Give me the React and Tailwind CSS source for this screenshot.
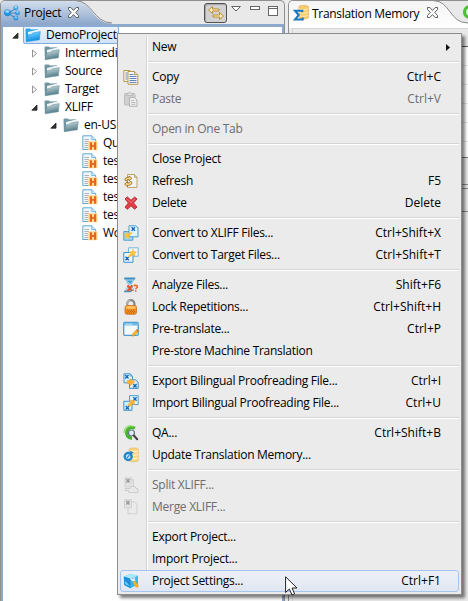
import React from "react";

/* ---------- small 16px icons ---------- */

const Svg = ({ children, className = "" }) => (
  <svg width="16" height="16" viewBox="0 0 16 16" className={`block shrink-0 ${className}`}>
    {children}
  </svg>
);

const ProjectIcon = () => (
  <Svg>
    <path d="M4 8L12 3.500M4 8h8M4 8l8 5.500" stroke="#4a8fca" strokeWidth="1.200" />
    <circle cx="3.400" cy="7.800" r="3.100" fill="#1f97ec" stroke="#1272bd" strokeWidth=".5" />
    <circle cx="11.800" cy="2.800" r="2.100" fill="#49b0f2" stroke="#1c7fca" strokeWidth=".5" />
    <circle cx="13.500" cy="8" r="2.100" fill="#35a5ee" stroke="#1c7fca" strokeWidth=".5" />
    <circle cx="11.800" cy="13.200" r="2.100" fill="#35a5ee" stroke="#1c7fca" strokeWidth=".5" />
    <ellipse cx="3.300" cy="6.500" rx="2" ry="1.200" fill="#a8defc" />
    <ellipse cx="11.800" cy="1.900" rx="1.300" ry=".8" fill="#c2e9ff" />
    <ellipse cx="13.500" cy="7.100" rx="1.300" ry=".8" fill="#a8defc" />
    <ellipse cx="11.800" cy="12.300" rx="1.300" ry=".8" fill="#a8defc" />
  </Svg>
);

const CloseX = () => (
  <svg width="11" height="11" viewBox="0 0 11 11" className="block shrink-0">
    <path
      d="M.5 .5h2.300l2.700 2.900L8.200 .5h2.300v2L7.700 5.500l2.800 3v2H8.200L5.500 7.600l-2.700 2.900H.5v-2l2.800-3L.5 2.500z"
      fill="#fafafa"
      stroke="#5d5d5d"
      strokeWidth="1"
    />
  </svg>
);

const Folder = ({ blue }) => {
  const id = blue ? "fb" : "fg";
  return (
    <Svg>
      <defs>
        <linearGradient id={id} x1="0" y1="0" x2=".3" y2="1">
          <stop offset="0" stopColor={blue ? "#9fe2ff" : "#d0dee2"} />
          <stop offset=".5" stopColor={blue ? "#43b8f7" : "#94afb7"} />
          <stop offset="1" stopColor={blue ? "#0f8be0" : "#4f7a87"} />
        </linearGradient>
      </defs>
      <path d="M.5 2.300l.8-.8h3.500l1.200 1 7-.2v9L1.500 14.500H.9z" fill={blue ? "#2ea4ea" : "#7296a1"} />
      <path d="M3 5l11-2.700v8l-11 2z" fill={blue ? "#e2f6ff" : "#eef3f4"} />
      <path d="M1.200 14.800L3.200 7.800l3.300-.6 1.200-1.200 7.600-1.400-.9 8.200z" fill={`url(#${id})`} stroke={blue ? "#1b8dd8" : "#6b929c"} strokeWidth=".5" />
    </Svg>
  );
};

const FileH = () => (
  <Svg>
    <path d="M.8 .8h9l3.900 3.700v10H.8z" fill="#eef7fd" stroke="#62a8cf" />
    <path d="M9.800 .8v3.700h3.900" fill="#d2edfb" stroke="#62a8cf" strokeWidth=".8" />
    <path d="M2.500 4.500h4.500M2.500 6.500h4.500M2.500 8.500h3.500M2.500 10.500h3.500M2.500 12.500h3.500" stroke="#aab3b9" />
    <rect x="6.300" y="6.300" width="9.200" height="9" rx=".5" fill="#ffdc90" />
    <path d="M8.900 7.200v7.500M13.100 7.200v7.500" stroke="#e8641f" strokeWidth="2.200" />
    <path d="M9 10.900h4" stroke="#e8641f" strokeWidth="1.900" />
  </Svg>
);

const CopyIcon = () => (
  <Svg>
    <path d="M.8 1.500h6l2 2v9h-8z" fill="#fbf6e2" stroke="#b79b4c" />
    <path d="M2.500 4h2M2.500 6h2M2.500 8h2M2.500 10h2" stroke="#6d89bf" />
    <path d="M5 2.500h6.500l3.300 3.200v9.600H5z" fill="#f4f7fc" stroke="#b79b4c" />
    <path d="M11.500 2.500v3.300h3.300" fill="#e8d9a0" stroke="#b79b4c" strokeWidth=".9" />
    <path d="M6.500 5.500h4M6.500 7.500h7M6.500 9.500h7M6.500 11.500h7M6.500 13.400h7" stroke="#5577b5" strokeWidth=".9" />
  </Svg>
);

const PasteIcon = () => (
  <Svg>
    <rect x="1.500" y="2.500" width="10.500" height="11.500" rx="1" fill="#cfcfcf" stroke="#bcbcbc" />
    <path d="M4 4.500V2.500h1.500L6.700 .9l1.300 1.600h1.500v2z" fill="#e2e2e2" stroke="#b2b2b2" strokeWidth=".8" />
    <path d="M6.500 6.500h4.700l2.800 2.500v6.300H6.500z" fill="#f0f0f0" stroke="#b2b2b2" />
    <path d="M8 9.500h3.500M8 11.500h4.500M8 13.300h4.500" stroke="#bcbcbc" />
  </Svg>
);

const RefreshIcon = () => (
  <Svg>
    <path d="M4.500 1.500h7l2.500 2.800v10.200H4.500z" fill="#eef2f9" stroke="#c0a566" />
    <path d="M11.500 1.500v2.800H14" fill="#e5d096" stroke="#c0a566" />
    <path d="M2 7.200V5.600L4.300 4.300H6V3l2.800 2.300L6 7.700V6.500H4.600L3.500 8z" fill="#f9d985" stroke="#93620e" strokeWidth=".8" />
    <path d="M8.800 9.200v1.600l-2.200 1.500H4.500v1.300l-2.900-2.400 2.900-2.500v1.300H6l1.200-1.600z" fill="#f9d985" stroke="#93620e" strokeWidth=".8" />
  </Svg>
);

const DeleteIcon = () => (
  <Svg>
    <path
      d="M2 4l2.200-2.200L8 5.300 11.700 2 14 4l-3.500 4 3.500 4-2.300 2.300L8 10.800l-3.600 3.500L2 12.200 5.400 8z"
      fill="#de3c46"
      stroke="#c22f3a"
      strokeLinejoin="round"
    />
    <path d="M3.600 3.800L8 7.500l4.200-3.900" stroke="#f58388" fill="none" strokeWidth=".8" />
  </Svg>
);

const Doc = ({ x, y, c = "#3d93c9", f = "#e4f5fd" }) => (
  <g transform={`translate(${x} ${y})`}>
    <path d="M.5 .5h6l2.500 2.300v6.700H.5z" fill={f} stroke={c} />
    <path d="M6.500 .5v2.300H9" fill="none" stroke={c} strokeWidth=".7" />
  </g>
);

const Star = ({ x, y }) => (
  <path transform={`translate(${x} ${y})`} d="M3.500 0l1 2.400L7 2.600 5 4.400l.6 2.500-2.200-1.400L1.100 7l.7-2.600L0 2.700l2.500-.3z" fill="#ffc635" stroke="#f5ab35" strokeWidth=".5" />
);

const XMark = ({ x, y, c = "#1765b4" }) => (
  <path transform={`translate(${x} ${y})`} d="M0 0l3.300 3.500M3.300 0L0 3.500" stroke={c} strokeWidth="1.300" />
);

const ToXliff = () => (
  <Svg>
    <path d="M.8 6.500h9v8.700h-9z" fill="#a9d8f2" stroke="#4b9dce" />
    <path d="M6 .8h6.500l2.500 2v9H6z" fill="#dff3fd" stroke="#4b9dce" />
    <XMark x={8.600} y={2.300} />
    <path d="M4.500 10.500l4.500-3" stroke="#ffc635" strokeWidth="1.800" />
    <Star x={.8} y={6.500} />
  </Svg>
);

const ToTarget = () => (
  <Svg>
    <path d="M5.500 .8h9.700v8.500H5.500z" fill="#eef7fc" stroke="#7ab8dc" />
    <path d="M.8 5.500h6.700l2.500 2.300v7.500H.8z" fill="#e9f7fe" stroke="#3a92cc" />
    <XMark x={2.500} y={9.800} />
    <path d="M5.500 10l3-3.500" stroke="#ffc635" strokeWidth="1.700" />
    <Star x={6.500} y={2.300} />
  </Svg>
);

const AnalyzeIcon = () => (
  <Svg>
    <path d="M1.200 1.500h11M1.200 14.300h7" stroke="#418fbf" strokeWidth="1.800" />
    <path d="M2.700 2.500h8.200L8 7.500l3 6H2.700l3-6z" fill="#bfe1f3" stroke="#6eabd0" strokeWidth=".8" />
    <path d="M4 3.500h5.700L7 7z" fill="#3b9bd3" />
    <path d="M4.500 8.300l4.700 5.700M9.300 8.300L4.500 14" stroke="#dd4f22" strokeWidth="1.900" />
    <path d="M10.800 9.200c.5-1.300 3.800-1.200 3.600.4 0 1.200-1.700 1.400-1.700 2.700M12.700 13.200v1.500" stroke="#e9652e" strokeWidth="1.500" fill="none" />
  </Svg>
);

const LockIcon = () => (
  <Svg>
    <path d="M4.200 8V4.800a3.600 3.600 0 017.200 0V8" fill="none" stroke="#858585" strokeWidth="2.200" />
    <path d="M3.900 7.500V4.700a3.900 3.600 0 013.500-3.400" fill="none" stroke="#cfcfcf" strokeWidth=".9" />
    <rect x="2" y="6.500" width="11.500" height="8.800" rx="2" fill="#f38a1d" stroke="#c8650d" strokeWidth=".7" />
    <rect x="2.800" y="7.100" width="9.900" height="2.900" rx="1.300" fill="#ffbd60" />
    <path d="M4 11h8M5 12.500h7M4 14h8" stroke="#ae5a12" strokeWidth=".8" strokeDasharray="1 1" />
  </Svg>
);

const PretranslateIcon = () => (
  <Svg>
    <rect x=".7" y="1.300" width="14.500" height="13" rx="1" fill="#f3f9fd" stroke="#4a9bd0" strokeWidth="1.300" />
    <rect x="1.200" y="1.800" width="13.500" height="2.700" fill="#6db9e6" />
    <path d="M2.500 3.200h7" stroke="#c3e5f8" />
    <path d="M9 15.200l.7-2.400 3.800-4 1.900 1.700-4 4z" fill="#fdb62c" stroke="#d58711" strokeWidth=".6" />
    <path d="M13 9.300l1-1.200 1.900 1.700-1 1.100z" fill="#ea6a50" />
  </Svg>
);

const ExportIcon = () => (
  <Svg>
    <Doc x={.5} y={.3} />
    <XMark x={2.200} y={2} />
    <path d="M6.500 6.800h5.800l2.900 2.400v6.200H6.500z" fill="#d5eefb" stroke="#3d93c9" />
    <XMark x={10.300} y={11} />
    <path d="M4 7.500h3.500v-2l4 3.500-4 3.500v-2H4z" fill="#ffb52e" stroke="#f3a33a" strokeWidth=".5" />
  </Svg>
);

const ImportIcon = () => (
  <Svg>
    <path d="M6.500 .7h8.700v8.800H6.500z" fill="#e4f5fd" stroke="#4b9dce" />
    <XMark x={10.300} y={2.200} />
    <path d="M.8 6.300h5.700l2.500 2.300v6.700H.8z" fill="#d5eefb" stroke="#3d93c9" />
    <XMark x={2.700} y={11} />
    <path d="M11.500 5.500v4.200l-1.700-1-3.300 3-1.800-2L8 6.900l-1.300-1.600z" fill="#ffb52e" stroke="#f3a33a" strokeWidth=".5" />
  </Svg>
);

const QaIcon = () => (
  <Svg>
    <path d="M11.800 3.300A5.400 5.400 0 109 13.300" fill="none" stroke="#45b32c" strokeWidth="3.200" />
    <path d="M10.500 1.900A6 6 0 001.300 8" fill="none" stroke="#8bdc5c" strokeWidth="1.200" />
    <circle cx="8.500" cy="8" r="3" fill="#d8ecf6" stroke="#66757f" strokeWidth="1.200" />
    <path d="M10.900 10.500l3.300 3.700" stroke="#454545" strokeWidth="2.100" strokeLinecap="round" />
  </Svg>
);

const UpdateTmIcon = () => (
  <Svg>
    <path d="M6 2c2-1.300 7-1.300 9.300 0v11.800c-2.500 1.200-7.300 1.200-9.300 0z" fill="#fcd784" stroke="#e9b760" strokeWidth=".7" />
    <path d="M6.500 4c3 .9 5.800 .9 8.800 0M6.500 7.500c3 .9 5.800 .9 8.800 0M6.500 11c3 .9 5.800 .9 8.800 0" stroke="#fff4d0" fill="none" strokeWidth="1.100" />
    <circle cx="5.200" cy="9.500" r="3.500" fill="#d7effb" stroke="#2588cb" strokeWidth="2.400" />
    <path d="M4 10.700l2.500-2.600" stroke="#2588cb" strokeWidth="1.300" />
    <path d="M6.700 3.800l3.800 1.500-2.700 3z" fill="#1e7fc6" />
  </Svg>
);

const SplitIcon = () => (
  <Svg>
    <Doc x={1.500} y={.3} c="#d0d0d0" f="#e1e1e1" />
    <XMark x={3.300} y={2} c="#989898" />
    <path d="M2 11.500h5l2-2h3l1 2 2 .5v3.500H5.500v-2H2z" fill="#e8e8e8" stroke="#cdcdcd" />
  </Svg>
);

const MergeIcon = () => (
  <Svg>
    <path d="M5 3h6.500l2.500 2.300v9.500H5z" fill="#ebebeb" stroke="#cfcfcf" />
    <path d="M1.500 .7h7v8.300h-7z" fill="#e2e2e2" stroke="#d2d2d2" />
    <XMark x={3.200} y={2} c="#989898" />
  </Svg>
);

const SettingsIcon = () => (
  <Svg>
    <path d="M.8 3.500L7 1l8 1.800v8.500l-7.500 4L1.300 12z" fill="#38b8f0" />
    <path d="M.8 3.500L7 1l8 1.800-7.500 2.900z" fill="#a6ebff" />
    <path d="M.8 3.500l6.700 2.200v9.600L1.300 12z" fill="#1f8ed6" />
    <path d="M2.500 8l4.500 5.500-5-2.500z" fill="#6ad2f7" />
    <path d="M8 4.300c-1.500 2 .3 4 2 3.600l1 1.200 1.700-1.300-1-1.300c.8-1.300 0-3-1.300-3.200l.3 2-1.300 .7z" fill="#edf3f6" stroke="#a4bdca" strokeWidth=".4" />
    <path d="M9.800 9.500l2-1.500 3.400 4.300c.4 1.600-1.400 2.600-2.400 1.600z" fill="#fbb52a" stroke="#d98b14" strokeWidth=".5" />
  </Svg>
);

const TmIcon = () => (
  <Svg>
    <path d="M6 1.500c2-1.300 7-1.300 9.300 0v11.300c-2 1.300-7.300 1.300-9.300 0z" fill="#fbcf70" stroke="#e0a845" strokeWidth=".7" />
    <path d="M6.300 4c3 1 6 1 8.700 0M6.300 7.300c3 1 6 1 8.700 0M6.300 10.600c3 1 6 1 8.700 0" stroke="#fff0b8" fill="none" />
    <path d="M9.300 7.300V5.700H2l3.700 4.400L2 14.500h7.700v-1.900" fill="none" stroke="#1876c5" strokeWidth="2" />
  </Svg>
);

/* ---------- tree ---------- */

const Arrow = ({ open }) => (
  <svg width="7" height="9" viewBox="0 0 7 9" className="block shrink-0">
    {open ? (
      <path d="M6 2v5.200H.8z" fill="#333" stroke="#222" strokeWidth=".8" />
    ) : (
      <path d="M1.500 1v7l4-3.500z" fill="#fff" stroke="#949494" />
    )}
  </svg>
);

const TreeRow = ({ pad, state, icon, label }) => (
  <div className={`flex h-[18px] items-center ${pad}`}>
    {state ? <Arrow open={state === "open"} /> : null}
    <div className={state ? "ml-[6px]" : ""}>{icon}</div>
    <span className="ml-[5px] whitespace-nowrap leading-[18px]">{label}</span>
  </div>
);

const ProjectPanel = () => (
  <section className="relative flex h-full w-[285px] shrink-0 flex-col rounded-t-[5px] border border-b-0 border-[#8f8f8f] bg-[#e9e9e9]">
    <svg width="283" height="24" viewBox="0 0 283 24" className="absolute left-0 top-0">
      <defs>
        <linearGradient id="tab" x1="0" y1="0" x2="0" y2="1">
          <stop offset="0" stopColor="#d2deec" />
          <stop offset="1" stopColor="#8ba6ca" />
        </linearGradient>
      </defs>
      <path d="M0 24V4Q0 0 4 0H74C91 0 91 22 110 22.500V24z" fill="url(#tab)" />
      <path d="M74 -.5C92 0 92 21.500 111 22" fill="none" stroke="#8a8a8a" />
    </svg>
    <header className="relative flex h-[23px] shrink-0 items-center pl-[3px]">
      <ProjectIcon />
      <span className="ml-[4px] w-[38px] whitespace-nowrap">Project</span>
      <div className="ml-[6px]">
        <CloseX />
      </div>
      <div className="ml-auto flex items-start pr-[5px]">
        <div className="flex h-[20px] w-[23px] items-center justify-center rounded-[3px] border border-[#505050] bg-[#d2d2d2] shadow-[inset_1px_1px_1px_#a5a5a5]">
          <svg width="18" height="16" viewBox="0 0 18 16">
            <path d="M1.500 5L5.500 1.500V4H12v2H5.500v2.500z" fill="#fdeeb5" stroke="#b98522" strokeWidth=".9" />
            <path d="M16.500 11l-4-3.500V10H6v2h6.500v2.500z" fill="#fdeeb5" stroke="#b98522" strokeWidth=".9" />
          </svg>
        </div>
        <svg width="50" height="14" viewBox="0 0 50 14" className="ml-[2px]">
          <path d="M2.500 3.500h9L7 8z" fill="#fff" stroke="#666" />
          <rect x="21.500" y="3.500" width="9" height="3" fill="#fff" stroke="#666" />
          <rect x="39.500" y="3.500" width="9" height="9" fill="#fff" stroke="#666" />
          <path d="M39 5.500h10" stroke="#666" />
        </svg>
      </div>
    </header>
    <div className="relative flex-1 border-x-[2px] border-t-[3px] border-[#8fa9cc] bg-white">
      <div className="relative -mt-px flex flex-col">
        <div className="flex h-[18px] items-center pl-[9px]">
          <Arrow open />
          <div className="ml-[4px] flex h-[18px] w-[96px] items-center rounded-[2px] border border-[#84acdd] bg-gradient-to-b from-[#eef5fd] to-[#cfe2f8] pl-[1px]">
            <Folder blue />
            <span className="ml-[5px] whitespace-nowrap tracking-[-0.2px]">DemoProject</span>
          </div>
        </div>
        <TreeRow pad="pl-[28px]" state="closed" icon={<Folder />} label="Intermediate" />
        <TreeRow pad="pl-[28px]" state="closed" icon={<Folder />} label="Source" />
        <TreeRow pad="pl-[28px]" state="closed" icon={<Folder />} label="Target" />
        <TreeRow pad="pl-[28px]" state="open" icon={<Folder />} label="XLIFF" />
        <TreeRow pad="pl-[47px]" state="open" icon={<Folder />} label="en-US" />
        {["Quick", "test1", "test2", "test3", "test4", "Word"].map((t) => (
          <TreeRow key={t} pad="pl-[79px]" icon={<FileH />} label={t} />
        ))}
      </div>
    </div>
  </section>
);

/* ---------- editor panel behind the menu ---------- */

const MemoryPanel = () => (
  <section className="relative ml-[3px] flex h-full flex-1 flex-col rounded-tl-[5px] border-l border-t border-[#8f8f8f] bg-[#e9e9e9]">
    <svg width="179" height="28" viewBox="0 0 179 28" className="absolute left-0 top-0">
      <defs>
        <linearGradient id="tab2" x1="0" y1="0" x2="0" y2="1">
          <stop offset="0" stopColor="#f4f4f4" />
          <stop offset="1" stopColor="#fff" />
        </linearGradient>
      </defs>
      <path d="M0 27V4Q0 0 4 0H146C162 0 160 22 179 22V27z" fill="url(#tab2)" />
      <path d="M144 -.5C162 0 160 22 179 22" fill="none" stroke="#8a8a8a" />
      <circle cx="181" cy="11" r="5.500" fill="#e3eef3" stroke="#4fc030" strokeWidth="3.200" />
    </svg>
    <header className="relative flex h-[27px] shrink-0 items-start pl-[4px] pt-[4px]">
      <TmIcon />
      <span className="ml-[3px] w-[108px] whitespace-nowrap leading-[17px] tracking-[-0.3px]">Translation Memory</span>
      <div className="ml-[7px] mt-[2px]">
        <CloseX />
      </div>
    </header>
    <div className="ml-[3px] flex flex-1 flex-col border-l border-t border-[#d5d5d5]">
      <div className="h-[18px] border-b border-[#555]" />
      <div className="flex h-[111px] flex-col border-b border-[#777] bg-white">
        {[0, 1, 2, 3, 4].map((i) => (
          <div key={i} className="h-[19px] border-b border-[#e8e8e8]" />
        ))}
      </div>
      <div className="h-[27px] border-b border-[#888]" />
      <div className="h-[4px] border-b border-[#888]" />
      <div className="h-[23px] border-b border-[#888]" />
    </div>
  </section>
);

/* ---------- context menu ---------- */

const ITEMS = [
  { label: "New", sub: true },
  null,
  { label: "Copy", key: "Ctrl+C", icon: <CopyIcon /> },
  { label: "Paste", key: "Ctrl+V", icon: <PasteIcon />, off: true },
  null,
  { label: "Open in One Tab", off: true },
  null,
  { label: "Close Project" },
  { label: "Refresh", key: "F5", icon: <RefreshIcon /> },
  { label: "Delete", key: "Delete", icon: <DeleteIcon /> },
  null,
  { label: "Convert to XLIFF Files...", key: "Ctrl+Shift+X", icon: <ToXliff /> },
  { label: "Convert to Target Files...", key: "Ctrl+Shift+T", icon: <ToTarget /> },
  null,
  { label: "Analyze Files...", key: "Shift+F6", icon: <AnalyzeIcon /> },
  { label: "Lock Repetitions...", key: "Ctrl+Shift+H", icon: <LockIcon /> },
  { label: "Pre-translate...", key: "Ctrl+P", icon: <PretranslateIcon /> },
  { label: "Pre-store Machine Translation" },
  null,
  { label: "Export Bilingual Proofreading File...", key: "Ctrl+I", icon: <ExportIcon /> },
  { label: "Import Bilingual Proofreading File...", key: "Ctrl+U", icon: <ImportIcon /> },
  null,
  { label: "QA...", key: "Ctrl+Shift+B", icon: <QaIcon /> },
  { label: "Update Translation Memory...", icon: <UpdateTmIcon /> },
  null,
  { label: "Split XLIFF...", icon: <SplitIcon />, off: true },
  { label: "Merge XLIFF...", icon: <MergeIcon />, off: true },
  null,
  { label: "Export Project..." },
  { label: "Import Project..." },
  { label: "Project Settings...", key: "Ctrl+F1", icon: <SettingsIcon />, active: true },
];

const MenuRow = ({ item }) => (
  <div
    className={`flex h-[22px] items-center rounded-[3px] border pl-[2px] pr-[17px] ${
      item.active ? "border-[#a4c5f2] bg-gradient-to-b from-[#edf0f6]/90 to-[#dfe6f3]/90" : "border-transparent"
    } ${item.off ? "text-[#6d6d6d]" : "text-black"}`}
  >
    <div className="w-[16px]">{item.icon}</div>
    <span className="ml-[13px] whitespace-nowrap leading-[20px]">{item.label}</span>
    <span className="ml-auto whitespace-nowrap leading-[20px] tracking-[0.01px]">{item.key}</span>
    {item.sub ? (
      <svg width="4" height="7" viewBox="0 0 4 7" className="-mr-[9px]">
        <path d="M0 0v7l4-3.500z" fill="#111" />
      </svg>
    ) : null}
  </div>
);

const ContextMenu = () => (
  <div className="absolute left-[117px] top-[33px] h-[562px] w-[345px] border border-[#8c8c8c] bg-[#ebebeb] pl-[2px] pr-[2px] pt-[2px] shadow-[3px_3px_3px_rgba(0,0,0,0.5)]">
    <div className="absolute bottom-[2px] left-[28px] top-[2px] w-[2px] border-l border-r border-l-[#d3d3d3] border-r-white" />
    <div className="relative">
      {ITEMS.map((it, i) =>
        it ? (
          <MenuRow key={i} item={it} />
        ) : (
          <div key={i} className="flex h-[8px] items-center pl-[28px]">
            <div className="h-[2px] w-full border-b border-t border-b-white border-t-[#d5d5d5]" />
          </div>
        )
      )}
    </div>
  </div>
);

const Cursor = () => (
  <svg width="13" height="20" viewBox="0 0 13 20" className="absolute left-[285px] top-[576px]">
    <path d="M.6 .8v15.700l3.700-3.500 2.700 6 2.600-1.200L7 12h5z" fill="#fff" stroke="#222" strokeWidth="1" />
  </svg>
);

export default function App() {
  return (
    <div className="relative h-[601px] w-[468px] overflow-hidden bg-[#ececec] font-['Open_Sans','Noto_Sans',sans-serif] text-[12px] tracking-[-0.27px] text-black">
      <div className="flex h-full">
        <ProjectPanel />
        <MemoryPanel />
      </div>
      <ContextMenu />
      <Cursor />
    </div>
  );
}
